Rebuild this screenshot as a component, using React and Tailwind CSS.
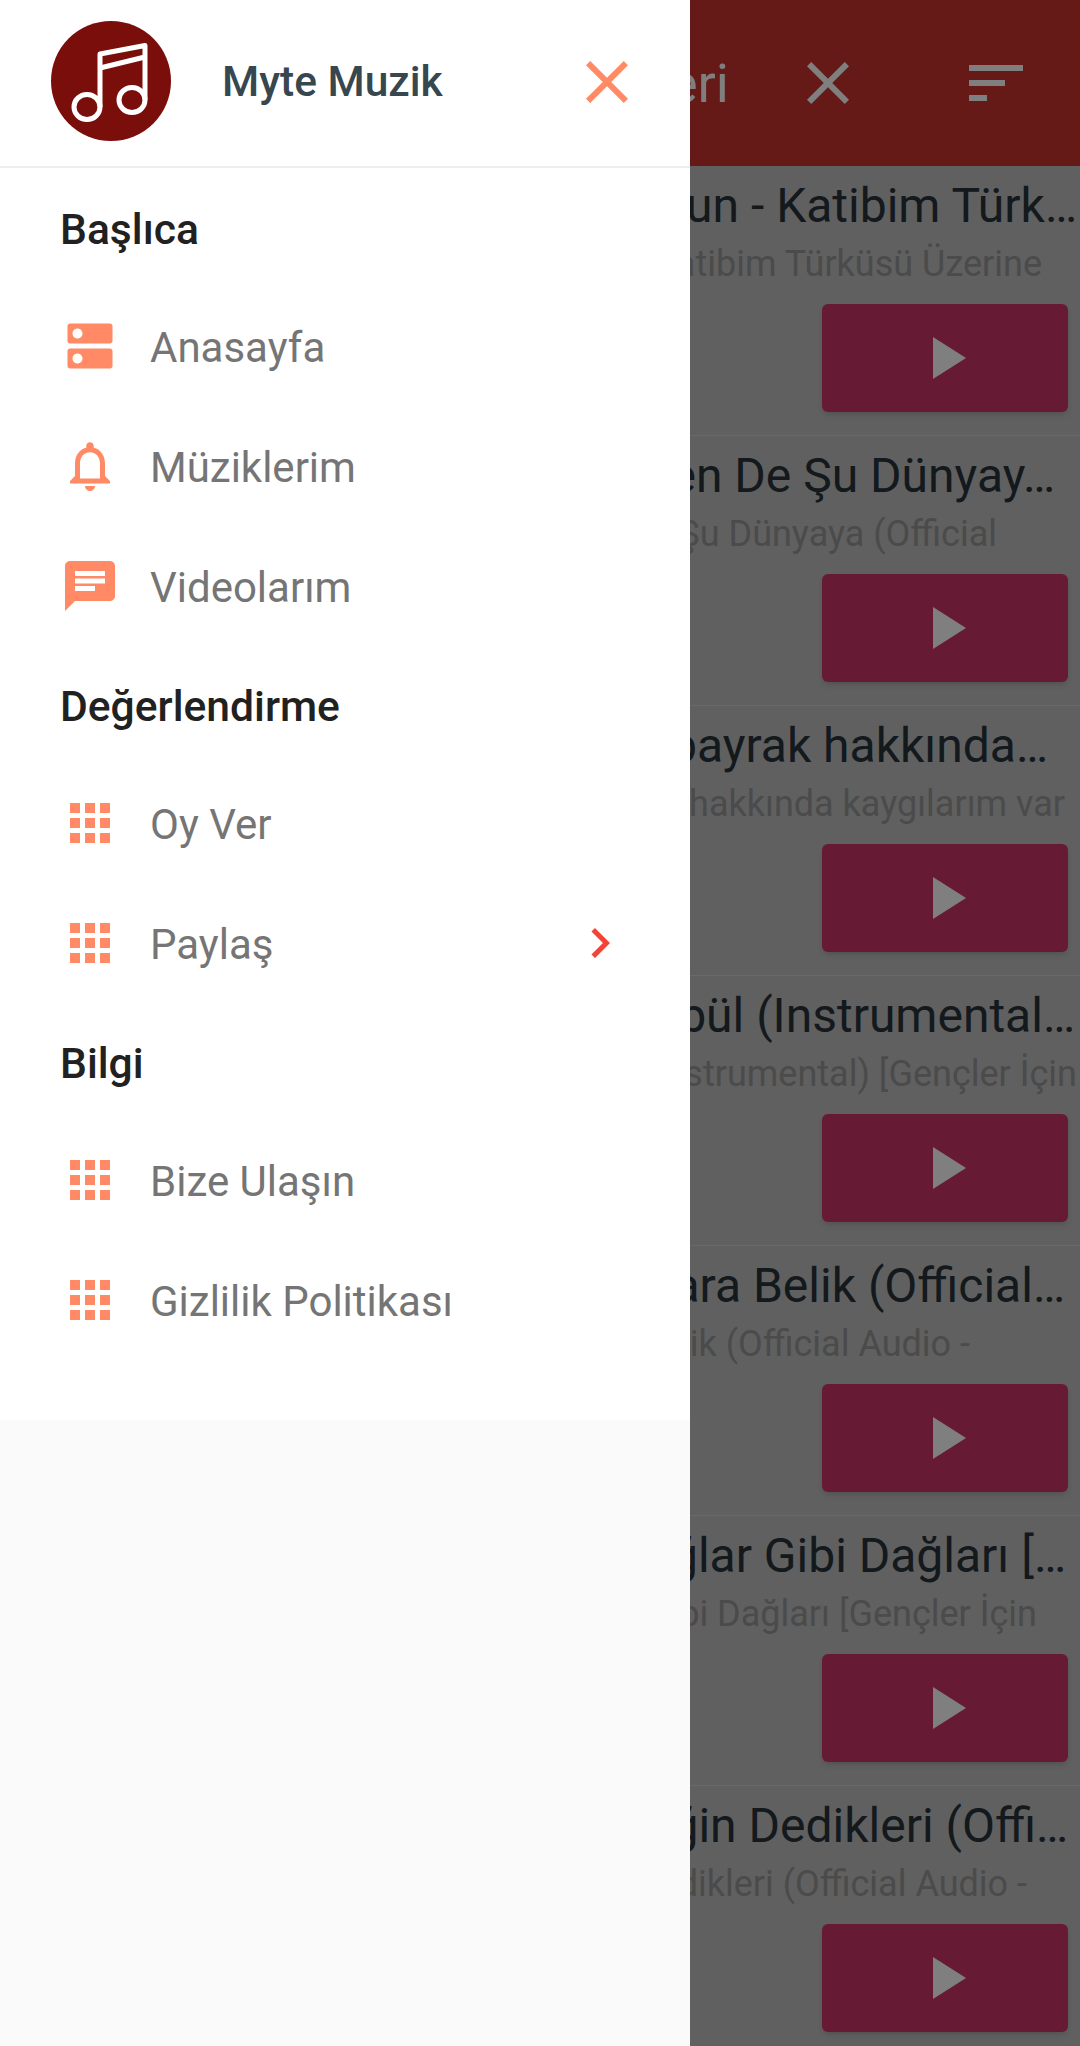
const songs = [
  { title: 'Uzun - Katibim Türk…', sub: 'Katibim Türküsü Üzerine', titlePr: 'pr-[3px]', subPr: 'pr-[38px]' },
  { title: 'Ben De Şu Dünyay…', sub: 'Ben De Şu Dünyaya (Official', titlePr: 'pr-[25px]', subPr: 'pr-[83px]' },
  { title: 'Bu bayrak hakkında…', sub: 'Bu bayrak hakkında kaygılarım var', titlePr: 'pr-[32px]', subPr: 'pr-[15px]' },
  { title: 'Bülbül (Instrumental…', sub: 'Bülbül (Instrumental) [Gençler İçin', titlePr: 'pr-[5px]', subPr: 'pr-[3px]' },
  { title: 'Kara Belik (Official…', sub: 'Kara Belik (Official Audio -', titlePr: 'pr-[15px]', subPr: 'pr-[110px]' },
  { title: 'Dağlar Gibi Dağları […', sub: 'Dağlar Gibi Dağları [Gençler İçin', titlePr: 'pr-[14px]', subPr: 'pr-[43px]' },
  { title: 'Değin Dedikleri (Offi…', sub: 'Değin Dedikleri (Official Audio -', titlePr: 'pr-[12px]', subPr: 'pr-[53px]' },
]

const CLOSE = 'M19 6.41L17.59 5 12 10.59 6.41 5 5 6.41 10.59 12 5 17.59 6.41 19 12 13.41 17.59 19 19 17.59 13.41 12z'
const DNS = 'M20 13H4c-.55 0-1 .45-1 1v6c0 .55.45 1 1 1h16c.55 0 1-.45 1-1v-6c0-.55-.45-1-1-1zM7 19c-1.1 0-2-.9-2-2s.9-2 2-2 2 .9 2 2-.9 2-2 2zM20 3H4c-.55 0-1 .45-1 1v6c0 .55.45 1 1 1h16c.55 0 1-.45 1-1V4c0-.55-.45-1-1-1zM7 9c-1.1 0-2-.9-2-2s.9-2 2-2 2 .9 2 2-.9 2-2 2z'
const BELL = 'M12 22c1.1 0 2-.9 2-2h-4c0 1.1.9 2 2 2zm6-6v-5c0-3.07-1.63-5.64-4.5-6.32V4c0-.83-.67-1.5-1.5-1.5s-1.5.67-1.5 1.5v.68C7.64 5.36 6 7.92 6 11v5l-2 2v1h16v-1l-2-2zm-2 1H8v-6c0-2.48 1.51-4.5 4-4.5s4 2.02 4 4.5v6z'
const CHAT = 'M20 2H4c-1.1 0-1.99.9-1.99 2L2 22l4-4h14c1.1 0 2-.9 2-2V4c0-1.1-.9-2-2-2zM6 9h12v2H6V9zm8 5H6v-2h8v2zm4-6H6V6h12v2z'
const APPS = 'M4 8h4V4H4v4zm6 12h4v-4h-4v4zm-6 0h4v-4H4v4zm0-6h4v-4H4v4zm6 0h4v-4h-4v4zm6-10v4h4V4h-4zm-6 4h4V4h-4v4zm6 6h4v-4h-4v4zm0 6h4v-4h-4v4z'
const SORT = 'M3 18h6v-2H3v2zM3 6v2h18V6H3zm0 7h12v-2H3v2z'
const PLAY = 'M8 5v14l11-7z'
const CHEVRON = 'M8.59 16.59L13.17 12 8.59 7.41 10 6l6 6-6 6z'

function Icon({ d, className }) {
  return (
    <svg viewBox="0 0 24 24" fill="currentColor" className={className}>
      <path d={d} />
    </svg>
  )
}

function Logo() {
  return (
    <svg viewBox="0 0 120 120" className="w-[120px] h-[120px] shrink-0 mb-[2px]">
      <circle cx="60" cy="60" r="60" fill="#7a0e0b" />
      <g fill="none" stroke="#fff" strokeWidth="5" strokeLinejoin="round">
        <ellipse cx="36" cy="86" rx="13" ry="12.5" />
        <ellipse cx="81" cy="79" rx="13" ry="12.5" />
        <path d="M49 86V33L94 24.5V79" />
        <path d="M49 47L94 36" />
      </g>
    </svg>
  )
}

function SectionLabel({ children }) {
  return (
    <div className="h-[117px] flex items-center pt-[4px] pl-[60px] text-[42.6px] font-medium text-[#212121]">
      {children}
    </div>
  )
}

function MenuItem({ icon, label, chevron }) {
  return (
    <div className="h-[120px] flex items-center pl-[60px] pr-[60px]">
      <Icon d={icon} className="w-[60px] h-[60px] text-[#ff8a65] shrink-0" />
      <span className="ml-[30px] pt-[3px] flex-1 text-[42px] text-[#757575]">{label}</span>
      {chevron && <Icon d={CHEVRON} className="w-[60px] h-[60px] text-[#f44336] shrink-0" />}
    </div>
  )
}

function SongRow({ song }) {
  return (
    <div className="h-[270px] border-b border-[#d2d2d2] flex flex-col pt-[10px] overflow-hidden">
      <div className={`h-[60px] leading-[60px] text-[48px] text-[#263238] whitespace-nowrap flex justify-end ${song.titlePr}`}>
        {song.title}
      </div>
      <div className={`mt-[4px] h-[48px] leading-[48px] text-[36px] text-[#969696] whitespace-nowrap flex justify-end ${song.subPr}`}>
        {song.sub}
      </div>
      <div className="mt-[16px] mr-[12px] self-end w-[246px] h-[108px] rounded-[6px] bg-[#ce3468] shadow-md flex items-center justify-center text-white">
        <Icon d={PLAY} className="w-[72px] h-[72px]" />
      </div>
    </div>
  )
}

export default function App() {
  return (
    <div className="relative w-[1080px] h-[2046px] overflow-hidden bg-[#c0c0c0] font-['Roboto',sans-serif]">
      <header className="h-[166px] bg-[#ca342e] text-white flex items-center justify-end">
        <span className="text-[54px] mr-[63px]">Müzikleri</span>
        <Icon d={CLOSE} className="w-[72px] h-[72px] mr-[96px]" />
        <Icon d={SORT} className="w-[72px] h-[72px] mr-[48px]" />
      </header>
      <div>
        {songs.map((song) => (
          <SongRow key={song.title} song={song} />
        ))}
      </div>

      {/* scrim + drawer */}
      <div className="absolute inset-0 bg-black/50" />
      <aside className="absolute left-0 top-0 bottom-0 w-[690px] bg-[#fafafa]">
        <div className="h-[168px] bg-white border-b-2 border-[#eeeeee] flex items-center pl-[51px] pr-[47px] pb-[2px]">
          <Logo />
          <span className="ml-[51px] flex-1 text-[42.5px] font-medium text-[#37474f]">Myte Muzik</span>
          <Icon d={CLOSE} className="w-[72px] h-[72px] text-[#ff8a65]" />
        </div>
        <nav className="bg-white pb-[60px] pt-[1px]">
          <SectionLabel>Başlıca</SectionLabel>
          <MenuItem icon={DNS} label="Anasayfa" />
          <MenuItem icon={BELL} label="Müziklerim" />
          <MenuItem icon={CHAT} label="Videolarım" />
          <SectionLabel>Değerlendirme</SectionLabel>
          <MenuItem icon={APPS} label="Oy Ver" />
          <MenuItem icon={APPS} label="Paylaş" chevron />
          <SectionLabel>Bilgi</SectionLabel>
          <MenuItem icon={APPS} label="Bize Ulaşın" />
          <MenuItem icon={APPS} label="Gizlilik Politikası" />
        </nav>
      </aside>
    </div>
  )
}
